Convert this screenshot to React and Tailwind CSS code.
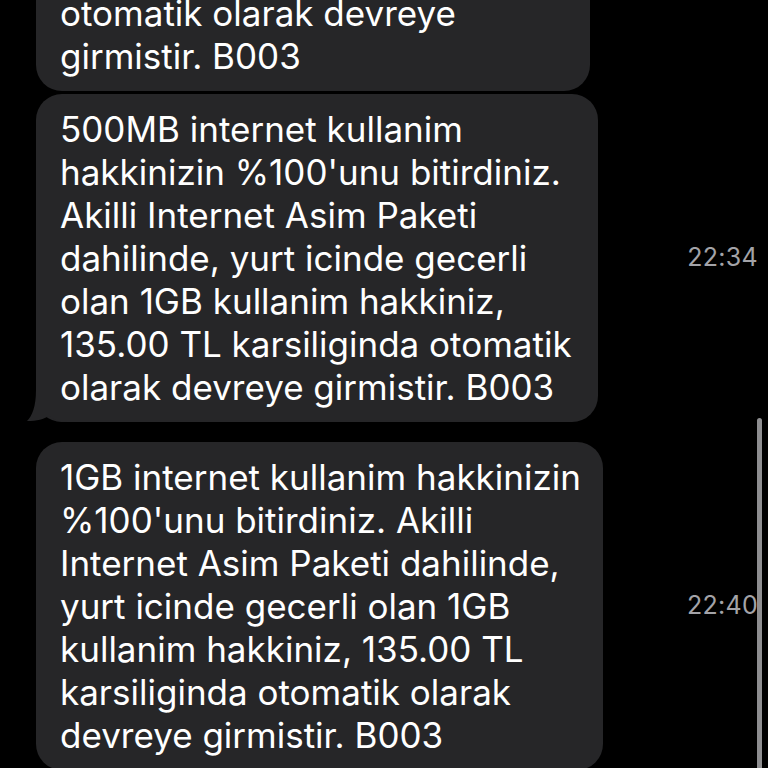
const FONT = { fontFamily: "Inter, 'Noto Sans', sans-serif" };

const MESSAGES = [
  {
    time: "22:28",
    width: "w-[554px]",
    lines: [
      "1GB internet kullanim hakkinizin",
      "%100'unu bitirdiniz. Akilli",
      "Internet Asim Paketi dahilinde,",
      "yurt icinde gecerli olan 1GB",
      "otomatik olarak devreye",
      "girmistir. B003",
    ],
  },
  {
    time: "22:34",
    width: "w-[562px]",
    tail: true,
    lines: [
      "500MB internet kullanim",
      "hakkinizin %100'unu bitirdiniz.",
      "Akilli Internet Asim Paketi",
      "dahilinde, yurt icinde gecerli",
      "olan 1GB kullanim hakkiniz,",
      "135.00 TL karsiliginda otomatik",
      "olarak devreye girmistir. B003",
    ],
  },
  {
    time: "22:40",
    width: "w-[567px]",
    lines: [
      "1GB internet kullanim hakkinizin",
      "%100'unu bitirdiniz. Akilli",
      "Internet Asim Paketi dahilinde,",
      "yurt icinde gecerli olan 1GB",
      "kullanim hakkiniz, 135.00 TL",
      "karsiliginda otomatik olarak",
      "devreye girmistir. B003",
    ],
  },
];

function Bubble({ msg }) {
  return (
    <div className={`relative ${msg.width} rounded-[26px] bg-[#262628] pl-[24px] pr-4 pt-[14px] pb-[13px]`}>
      {msg.tail && (
        <svg
          className="absolute left-[-9px] bottom-0"
          width="40"
          height="32"
          viewBox="0 0 40 32"
        >
          <path d="M9 0 C9 17 5 26 0 31 C10 31 17 29 22 26 C26 29 31 32 40 32 L40 0 Z" fill="#262628" />
        </svg>
      )}
      <div className="relative">
        {msg.lines.map((line, i) => (
          <div key={i} className="whitespace-nowrap text-[35px] leading-[43px] text-white">
            {line}
          </div>
        ))}
      </div>
    </div>
  );
}

export default function App() {
  return (
    <div className="relative w-[768px] h-[768px] overflow-hidden bg-black" style={FONT}>
      <div className="flex flex-col -mt-[194px]">
        {MESSAGES.map((msg, i) => (
          <div
            key={i}
            className={`flex items-center pl-[36px] pr-[10px] ${i === 1 ? "mt-[3px]" : i === 2 ? "mt-[20px]" : ""}`}
          >
            <Bubble msg={msg} />
            <span className="ml-auto text-[25px] text-[#a3a3a8] tracking-[0.3px]">{msg.time}</span>
          </div>
        ))}
      </div>

      {/* scroll indicator */}
      <div className="absolute right-[6px] top-[418px] w-[5px] h-[400px] rounded-full bg-[#8e8e90]" />
    </div>
  );
}
